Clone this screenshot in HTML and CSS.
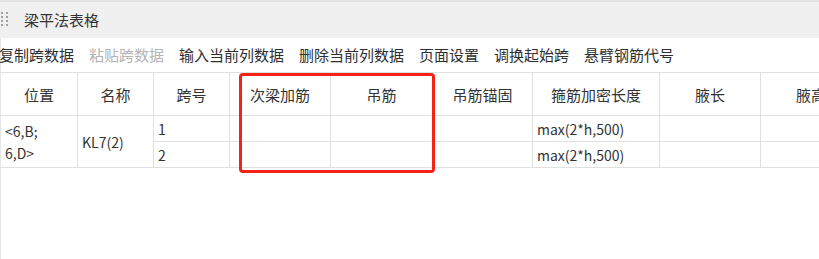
FILE: index.html
```html
<!DOCTYPE html>
<html lang="zh">
<head>
<meta charset="utf-8">
<link rel="stylesheet" href="styles.css">
</head>
<body>
<div class="panel">
  <div class="titlebar">
    <svg class="grip" width="8" height="16" viewBox="0 0 8 16">
      <g fill="#a0a0a0">
        <rect x="0" y="0" width="2" height="2"/><rect x="5" y="0" width="2" height="2"/>
        <rect x="0" y="4" width="2" height="2"/><rect x="5" y="4" width="2" height="2"/>
        <rect x="0" y="8" width="2" height="2"/><rect x="5" y="8" width="2" height="2"/>
        <rect x="0" y="12" width="2" height="2"/><rect x="5" y="12" width="2" height="2"/>
      </g>
    </svg>
    <span class="title">梁平法表格</span>
  </div>
  <div class="toolbar">
    <span class="tool">复制跨数据</span>
    <span class="tool disabled">粘贴跨数据</span>
    <span class="tool">输入当前列数据</span>
    <span class="tool">删除当前列数据</span>
    <span class="tool">页面设置</span>
    <span class="tool">调换起始跨</span>
    <span class="tool">悬臂钢筋代号</span>
  </div>
  <div class="grid-wrap">
    <div class="grid">
      <div class="th">位置</div>
      <div class="th">名称</div>
      <div class="th">跨号</div>
      <div class="th">次梁加筋</div>
      <div class="th">吊筋</div>
      <div class="th">吊筋锚固</div>
      <div class="th">箍筋加密长度</div>
      <div class="th">腋长</div>
      <div class="th">腋高</div>

      <div class="td span2 pos">&lt;6,B;<br>6,D&gt;</div>
      <div class="td span2">KL7(2)</div>
      <div class="td">1</div>
      <div class="td"></div>
      <div class="td"></div>
      <div class="td"></div>
      <div class="td">max(2*h,500)</div>
      <div class="td"></div>
      <div class="td"></div>

      <div class="td">2</div>
      <div class="td"></div>
      <div class="td"></div>
      <div class="td"></div>
      <div class="td">max(2*h,500)</div>
      <div class="td"></div>
      <div class="td"></div>
    </div>
    <div class="highlight"></div>
  </div>
</div>
</body>
</html>
```
FILE: styles.css
```css
html, body {
  margin: 0;
  padding: 0;
  background: #ffffff;
}
body {
  width: 819px;
  height: 259px;
  overflow: hidden;
  font-family: "Noto Sans CJK SC", "Noto Sans", sans-serif;
  color: #333333;
}
.panel {
  height: 259px;
  border-left: 1px solid #e6e6e6;
  box-sizing: border-box;
}
.titlebar {
  height: 38px;
  box-sizing: border-box;
  border-top: 2px solid #e2e2e2;
  background: #f0f0f0;
  display: flex;
  align-items: center;
  margin-left: -1px;
}
.grip {
  margin-left: 1px;
  margin-right: 15px;
}
.title {
  font-size: 15px;
  line-height: 20px;
  color: #333333;
}
.toolbar {
  height: 34px;
  display: flex;
  align-items: center;
  gap: 15px;
  margin-left: -2px;
  white-space: nowrap;
}
.tool {
  font-size: 15px;
  line-height: 20px;
  color: #2f2f2f;
}
.tool.disabled {
  color: #b4b4b4;
}
.grid-wrap {
  position: relative;
  width: 818px;
  overflow: hidden;
  height: 187px;
}
.grid {
  display: grid;
  grid-template-columns: 77px 76px 76px 101px 102px 100px 127px 101px 101px;
  grid-template-rows: 43px 26px 26px;
  width: 861px;
  border-top: 1px solid #e0e0e0;
}
.th, .td {
  box-sizing: border-box;
  border-right: 1px solid #e0e0e0;
  border-bottom: 1px solid #e0e0e0;
  display: flex;
  align-items: center;
  white-space: nowrap;
  overflow: hidden;
  color: #333333;
}
.th {
  justify-content: center;
  font-size: 15px;
  line-height: 20px;
  padding-top: 2px;
}
.td {
  padding-left: 4px;
  font-size: 14px;
  line-height: 20px;
}
.span2 {
  grid-row: span 2;
}
.pos {
  line-height: 22px;
  white-space: normal;
}
.highlight {
  position: absolute;
  left: 238px;
  top: 1px;
  width: 196px;
  height: 100px;
  box-sizing: border-box;
  border: 3px solid #f52218;
  border-radius: 4px;
}
```
